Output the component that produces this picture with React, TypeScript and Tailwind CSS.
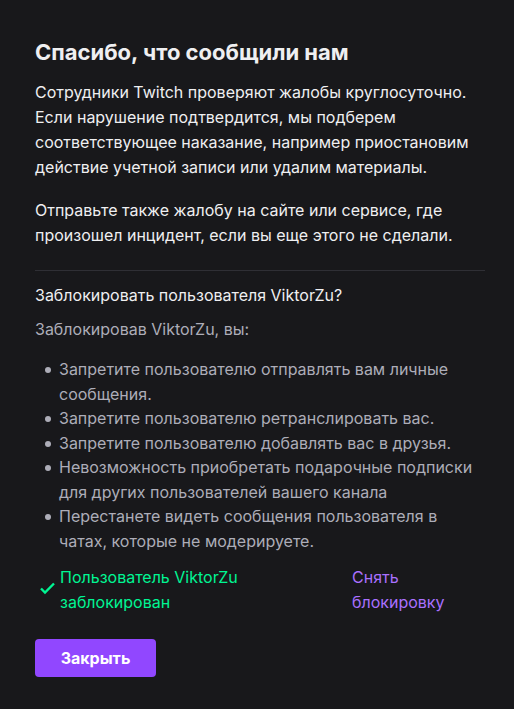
import React from 'react';

const bullets = [
    'Запретите пользователю отправлять вам личные сообщения.',
    'Запретите пользователю ретранслировать вас.',
    'Запретите пользователю добавлять вас в друзья.',
    'Невозможность приобретать подарочные подписки для других пользователей вашего канала',
    'Перестанете видеть сообщения пользователя в чатах, которые не модерируете.',
];

export default function App() {
    return (
        <div className="min-h-[709px] w-[514px] bg-[#18181b] pl-[35px] pr-[29px] pt-[38px] text-[16px] leading-[25px] text-[#efeff1] font-['Inter',sans-serif]">
            <h2 className="text-[22px] leading-[28px] font-bold">Спасибо, что сообщили нам</h2>

            <p className="mt-[14px]">
                Сотрудники Twitch проверяют жалобы круглосуточно. Если нарушение подтвердится, мы подберем соответствующее наказание, например приостановим действие учетной записи или удалим материалы.
            </p>
            <p className="mt-[18px]">
                Отправьте также жалобу на сайте или сервисе, где произошел инцидент, если вы еще этого не сделали.
            </p>

            <div className="mt-[22px] h-px bg-[#2f2f35]" />

            <div className="mt-[12px]">Заблокировать пользователя ViktorZu?</div>
            <div className="mt-[9px] text-[#adadb8]">Заблокировав ViktorZu, вы:</div>

            <ul className="mt-[15px] pl-[10px] pr-[4px] text-[#adadb8] leading-[24.5px]">
                {bullets.map((b) => (
                    <li key={b} className="flex">
                        <span className="mt-[10px] mr-[8px] h-[6px] w-[6px] shrink-0 rounded-full bg-[#adadb8]" />
                        <span>{b}</span>
                    </li>
                ))}
            </ul>

            <div className="mt-[12px] flex items-start">
                <svg className="mt-[16px] mr-[4px] ml-[4px] shrink-0" width="17" height="14" viewBox="0 0 17 14">
                    <path d="M2 7.5l4 4L15 2.5" fill="none" stroke="#00f593" strokeWidth="2.4" />
                </svg>
                <div className="w-[250px] text-[#00f593]">Пользователь ViktorZu заблокирован</div>
                <button className="ml-[42px] w-[100px] text-left text-[#a970ff]">Снять блокировку</button>
            </div>

            <button className="mt-[24px] h-[38px] w-[121px] rounded-[4px] bg-[#9147ff] text-[16px] font-bold text-white">
                Закрыть
            </button>
        </div>
    );
}
